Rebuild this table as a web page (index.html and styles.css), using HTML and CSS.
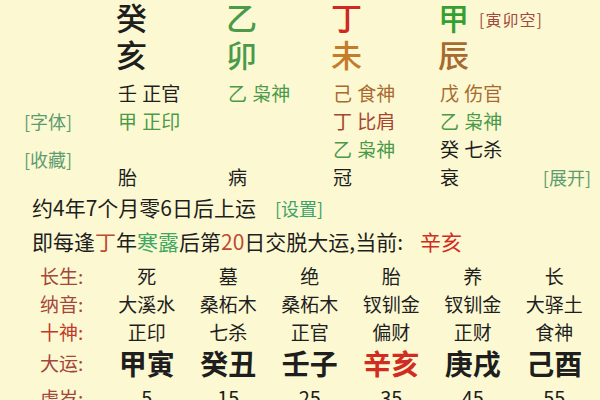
FILE: index.html
```html
<!DOCTYPE html>
<html lang="zh">
<head>
<meta charset="utf-8">
<link rel="stylesheet" href="styles.css">
</head>
<body>
<div class="page">
  <div class="chart">
    <div class="cell stem c1 black">癸</div>
    <div class="cell stem c2 green">乙</div>
    <div class="cell stem c3 red">丁</div>
    <div class="cell stem c4 bright">甲<span class="void">[寅卯空]</span></div>

    <div class="cell branch r2 c1 black">亥</div>
    <div class="cell branch r2 c2 green">卯</div>
    <div class="cell branch r2 c3 orange">未</div>
    <div class="cell branch r2 c4 brown">辰</div>

    <div class="cell hid r3 c1 black">壬 正官</div>
    <div class="cell hid r3 c2 green">乙 枭神</div>
    <div class="cell hid r3 c3 brown">己 食神</div>
    <div class="cell hid r3 c4 brown">戊 伤官</div>

    <div class="cell link r4 c0">[字体]</div>
    <div class="cell hid r4 c1 green">甲 正印</div>
    <div class="cell hid r4 c3 rust">丁 比肩</div>
    <div class="cell hid r4 c4 green">乙 枭神</div>

    <div class="cell link fav c0">[收藏]</div>
    <div class="cell hid r5 c3 green">乙 枭神</div>
    <div class="cell hid r5 c4 black">癸 七杀</div>

    <div class="cell hid r6 c1 black">胎</div>
    <div class="cell hid r6 c2 black">病</div>
    <div class="cell hid r6 c3 black">冠</div>
    <div class="cell hid r6 c4 black">衰</div>
    <div class="cell link r6 c5">[展开]</div>
  </div>

  <div class="info">
    <p class="line">约4年7个月零6日后上运<span class="set">[设置]</span></p>
    <p class="line">即每逢<span class="rust2">丁</span>年<span class="teal">寒露</span>后第<span class="rust2">20</span>日交脱大运,当前:<span class="now cur">辛亥</span></p>
  </div>

  <div class="table">
    <div class="trow">
      <div class="lab">长生:</div>
      <div>死</div><div>墓</div><div>绝</div><div>胎</div><div>养</div><div>长</div>
    </div>
    <div class="trow">
      <div class="lab">纳音:</div>
      <div>大溪水</div><div>桑柘木</div><div>桑柘木</div><div>钗钏金</div><div>钗钏金</div><div>大驿土</div>
    </div>
    <div class="trow">
      <div class="lab red-lab">十神:</div>
      <div>正印</div><div>七杀</div><div>正官</div><div>偏财</div><div>正财</div><div>食神</div>
    </div>
    <div class="trow big">
      <div class="lab">大运:</div>
      <div>甲寅</div><div>癸丑</div><div>壬子</div><div class="now">辛亥</div><div>庚戌</div><div>己酉</div>
    </div>
    <div class="trow age">
      <div class="lab">虚岁:</div>
      <div>5</div><div>15</div><div>25</div><div>35</div><div>45</div><div>55</div>
    </div>
  </div>
</div>
</body>
</html>
```

FILE: styles.css
```css
html, body {
  margin: 0;
  padding: 0;
}
body {
  background: #fcf9d2;
  font-family: "Noto Sans CJK SC", "Noto Sans", sans-serif;
  color: #1e1e1e;
}
.page {
  width: 600px;
  height: 400px;
  overflow: hidden;
}

/* pillars */
.chart {
  display: grid;
  grid-template-columns: 118px 110px 105px 107px 1fr;
  grid-template-rows: 35px 38px 34px 28px 28px 28px;
}
.cell { white-space: nowrap; }
.c0 { grid-column: 1; }
.c1 { grid-column: 2; }
.c2 { grid-column: 3; }
.c3 { grid-column: 4; }
.c4 { grid-column: 5; }
.c5 { grid-column: 5; justify-self: end; padding-right: 9px; }
.stem { grid-row: 1; }
.r2 { grid-row: 2; }
.r3 { grid-row: 3; }
.r4 { grid-row: 4; }
.r5 { grid-row: 5; }
.r6 { grid-row: 6; }

.stem, .branch {
  font-size: 31px;
  font-weight: 500;
  margin-left: -2px;
}
.stem { line-height: 33px; }
.branch { line-height: 38px; }
.hid {
  font-size: 19px;
  line-height: 28px;
  word-spacing: 1px;
  align-self: end;
}
.void {
  font-size: 16px;
  font-weight: 400;
  color: #a1483f;
  margin-left: 10px;
  vertical-align: 4px;
  letter-spacing: 1px;
}
.link {
  font-size: 18px;
  line-height: 28px;
  color: #5e9c70;
  align-self: end;
}
.r4.link { padding-left: 24px; }
.fav {
  grid-row: 5 / 7;
  align-self: start;
  padding-left: 24px;
  margin-top: 10px;
}

.black { color: #1e1e1e; }
.green { color: #4a9a4a; }
.bright { color: #34a034; }
.red { color: #cc2a22; }
.orange { color: #c47c2c; }
.brown { color: #a86a30; }
.rust { color: #a8442e; }

/* info lines */
.info {
  padding-left: 32px;
}
.line {
  margin: 0;
  font-size: 21px;
  line-height: 33px;
  white-space: nowrap;
}
.set {
  font-size: 18px;
  color: #3da36a;
  margin-left: 19px;
}
.rust2 { color: #bf4a30; }
.teal { color: #3da862; }
.now { color: #d12c22; }
.cur { margin-left: 17px; }

/* table */
.table {
  padding-top: 4px;
  padding-left: 40px;
}
.trow {
  display: grid;
  grid-template-columns: 66px repeat(6, 81.5px);
  font-size: 19px;
  line-height: 28px;
  text-align: center;
}
.trow .lab {
  text-align: left;
  font-size: 19px;
  color: #a4463c;
}
.trow .red-lab { color: #c0392b; }
.trow.big {
  font-size: 28px;
  font-weight: 700;
  line-height: 34px;
}
.trow.big .lab {
  font-weight: 400;
  font-size: 19px;
}
.trow.age {
  margin-top: 4px;
  font-size: 20px;
}
```
